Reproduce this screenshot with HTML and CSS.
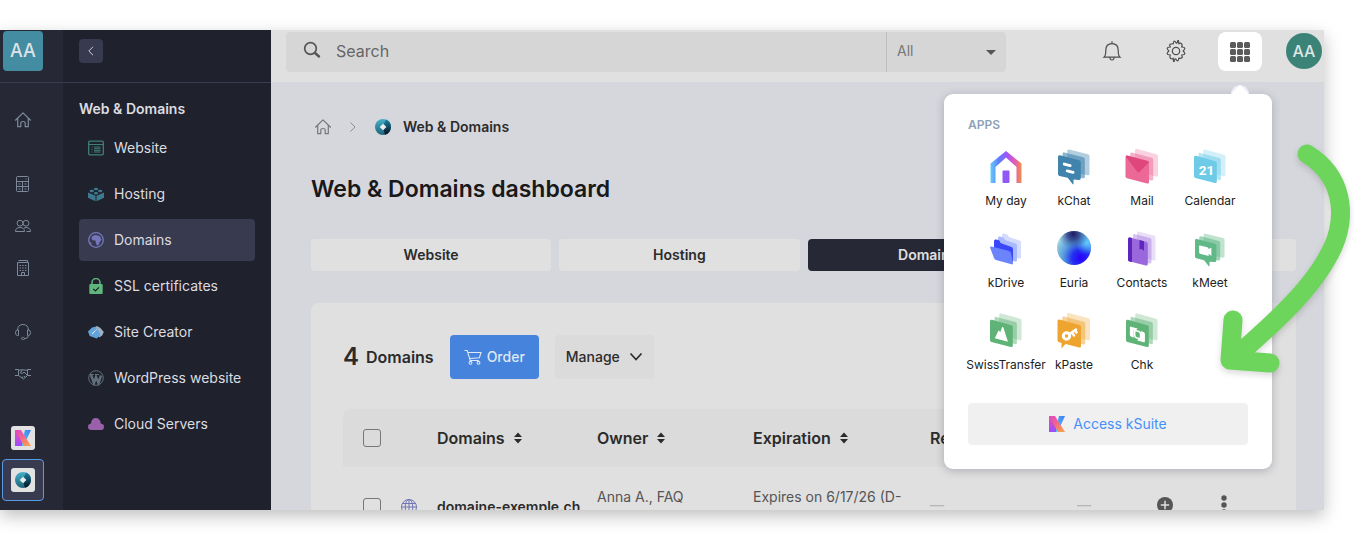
FILE: index.html
```html
<!DOCTYPE html>
<html lang="en">
<head>
  <meta charset="UTF-8">
  <meta name="viewport" content="width=device-width, initial-scale=1.0">
  <title>Web &amp; Domains dashboard</title>
  <link rel="stylesheet" href="styles.css">
</head>
<body>
  <!-- shared shapes -->
  <svg class="defs" aria-hidden="true">
    <defs>
      <linearGradient id="k-left" x1="0" y1="0" x2="0" y2="1"><stop offset="0" stop-color="#f04bb0"/><stop offset="1" stop-color="#9a4dff"/></linearGradient>
      <linearGradient id="k-diag" x1="0" y1="0" x2=".7" y2="1"><stop offset="0" stop-color="#e048c8"/><stop offset=".5" stop-color="#f0648c"/><stop offset="1" stop-color="#fb9a52"/></linearGradient>
      <linearGradient id="k-right" x1="0" y1="1" x2="1" y2="0"><stop offset="0" stop-color="#4fd0f5"/><stop offset="1" stop-color="#3f7cf8"/></linearGradient>
      <linearGradient id="ring" x1="0" y1="0" x2="0" y2="1"><stop offset="0" stop-color="#45b0c8"/><stop offset="1" stop-color="#1e6479"/></linearGradient>
      <linearGradient id="ring-dark" x1="0" y1="0" x2="0" y2="1"><stop offset="0" stop-color="#1d7fa0"/><stop offset="1" stop-color="#05101f"/></linearGradient>
      <linearGradient id="day" x1="0" y1="0" x2="1" y2="0"><stop offset="0" stop-color="#63ccf8"/><stop offset=".28" stop-color="#5f7bff"/><stop offset=".55" stop-color="#a452fb"/><stop offset=".78" stop-color="#e25cb4"/><stop offset="1" stop-color="#f09048"/></linearGradient>
      <radialGradient id="orb-base" cx=".7" cy=".8" r=".85"><stop offset="0" stop-color="#2a00ff"/><stop offset=".3" stop-color="#2330f0"/><stop offset=".6" stop-color="#559bdc"/><stop offset="1" stop-color="#a8dbe4"/></radialGradient>
      <radialGradient id="orb-top" cx=".48" cy=".08" r=".45"><stop offset="0" stop-color="#1d1660"/><stop offset=".4" stop-color="#27347f" stop-opacity=".8"/><stop offset="1" stop-color="#3a60b0" stop-opacity="0"/></radialGradient>
      <radialGradient id="orb-side" cx=".88" cy=".35" r=".35"><stop offset="0" stop-color="#5fcdfa"/><stop offset="1" stop-color="#4aa8f5" stop-opacity="0"/></radialGradient>
      <symbol id="house" viewBox="0 0 16 16"><path d="M.5 8.2 8 .9l7.500 7.300M2.700 6.500v8.200h3.100v-3.700q0-1.500 2.200-1.500t2.200 1.500v3.700h3.100V6.500" fill="none" stroke="currentColor" stroke-width="1.200" stroke-linejoin="round" stroke-linecap="round"/></symbol>
      <symbol id="k-logo" viewBox="0 0 16 16"><path d="M10 0h6L8.500 16H6z" fill="url(#k-right)"/><path d="M0 0h4l3 6v10H0z" fill="url(#k-left)"/><path d="M0 0h6l10 16H9z" fill="url(#k-diag)"/></symbol>
      <symbol id="ring-logo" viewBox="0 0 16 16"><circle cx="8" cy="8" r="8" fill="url(#ring)"/><path d="M9 5 11 .6A8 8 0 0 1 10 15.700L8.500 11l3-3z" fill="url(#ring-dark)"/><path d="m8 4.700 3.300 3.300L8 11.300 4.700 8z" fill="#e6eef0"/></symbol>
      <symbol id="stack" viewBox="0 0 34 36" overflow="visible">
        <path d="M11.500 0 31 5.300q1.500.5 1.500 2V26q0 2-2 1.500L11 22.500q-1.500-.5-1.500-2V1.500q0-2 2-1.500z" fill="currentColor" opacity=".3"/>
        <path d="M6.500 3.500 26.200 8.700q1.500.5 1.500 2V30q0 2-2 1.500L6.200 26q-1.500-.5-1.500-2V5q0-2 1.800-1.500z" fill="currentColor" opacity=".5"/>
        <path d="M2 6.500 22 12q1.500.5 1.500 2v19q0 2-2 1.500l-20-5.200Q0 28.800 0 27.500V8q0-2 2-1.500z" fill="currentColor"/>
      </symbol>
      <symbol id="stack-chat" viewBox="0 0 34 36" overflow="visible">
        <path d="M11.500 0 31 4.800q1.500.5 1.500 2V25q0 2-2 1.500L11 22.500q-1.500-.5-1.500-2V1.500q0-2 2-1.500z" fill="currentColor" opacity=".4"/>
        <path d="M6.500 3 26.200 8q1.500.5 1.500 2v18q0 2-2 1.500L6.200 25q-1.500-.5-1.500-2V4.500q0-2 1.800-1.500z" fill="currentColor" opacity=".6"/>
        <path d="M2 6 22 11q1.500.5 1.500 2v16.500q0 2-2 1.800L16 31v4.200q0 1.300-1 .3L10 29.200l-8.500-2Q0 26.700 0 25.200V7.500Q0 5.500 2 6z" fill="currentColor"/>
      </symbol>
    </defs>
  </svg>

  <div class="window">
    <nav class="rail" aria-label="Main">
      <div class="rail-head"><a href="#" class="org">AA</a></div>
      <div class="rail-body">
        <div class="rail-group">
          <a href="#" aria-label="Home"><svg width="16" height="16"><use href="#house"/></svg></a>
        </div>
        <div class="rail-group">
          <a href="#" aria-label="Accounting"><svg width="16" height="16" viewBox="0 0 16 16"><rect x="1.500" y=".5" width="12" height="15" rx="1"/><path d="M1.500 5.500h12M1.500 10.500h12M7.500 5.500v10M3.500 8h2M9.500 8h2M3.500 13h2M9.500 13h2M11 2.500v1"/></svg></a>
          <a href="#" aria-label="Users"><svg width="16" height="16" viewBox="0 0 16 16"><circle cx="5" cy="5.200" r="2.900"/><circle cx="11" cy="5.200" r="2.900"/><path d="M.5 13.500q0-4 4.500-4t4.500 4zM9 10q1-.6 2-.5 4.500.2 4.500 4h-4"/></svg></a>
          <a href="#" aria-label="Company"><svg width="16" height="16" viewBox="0 0 16 16"><path d="M2.500 2.500h11v13h-11zM3.500.5h9v2M6.500 15.500v-3h3v3"/><path d="M4.500 5.500h7M4.500 8h7M4.500 10.500h7" stroke-dasharray="1.500 1.200"/></svg></a>
        </div>
        <div class="rail-group">
          <a href="#" aria-label="Support"><svg width="16" height="16" viewBox="0 0 16 16"><path d="M2.500 6Q2.800.5 8 .5T13.500 6M3.500 6H2.300Q.5 6.200.5 8.700t1.800 2.800h1.200zM12.500 6h1.200q1.800.2 1.800 2.700t-1.800 2.800h-1.200zM13.500 11.500q-.2 3-4 3.200"/><rect x="6.500" y="13.500" width="3" height="2" rx="1"/></svg></a>
          <a href="#" aria-label="Partners"><svg width="16" height="16" viewBox="0 0 16 16"><path d="M0 3.500h3.500v6H0M16 3.500h-3.500v6H16M3.500 4.500l3-.8L9 4l3.500.3M7 4 5.500 7l2 .5L9 6l3.500 3.500L8.500 13l-5-3.500M7 12l1-1.500M9 11l1-1"/></svg></a>
        </div>
        <div class="rail-group">
          <a href="#" aria-label="kSuite"><span class="tile"><svg width="16" height="16"><use href="#k-logo"/></svg></span></a>
          <a href="#" aria-label="Web and domains" class="current"><span class="tile"><svg width="16" height="16"><use href="#ring-logo"/></svg></span></a>
        </div>
      </div>
    </nav>

    <aside class="sidebar">
      <div class="sidebar-head">
        <button class="collapse" aria-label="Collapse menu"><svg width="10" height="10" viewBox="0 0 10 10"><path d="M7 .8 2.800 5 7 9.200" fill="none" stroke="#cfd0d8"/></svg></button>
      </div>
      <h2>Web &amp; Domains</h2>
      <ul class="menu">
        <li><a href="#"><svg width="16" height="16" viewBox="0 0 16 16" fill="none" stroke="#3f8077"><rect x=".7" y="1.200" width="14.600" height="13.600" rx="1" stroke-width="1.300"/><path d="M1 4.500h14M3.500 7h1M3.500 9.500h1M3.500 12h1M6 7h6.500M6 8.700h6.500M6 10.400h6.500M6 12h6.500"/></svg>Website</a></li>
        <li><a href="#"><svg width="16" height="16" viewBox="0 0 16 16" fill="#3d7a8f"><path d="M0 6.500 7.500 9.800v5.400L0 11.800zM16 6.500 8.500 9.800v5.400l7.500-3.400z"/><ellipse cx="8" cy="3" rx="2.200" ry="1.200"/><ellipse cx="3.800" cy="5" rx="2.200" ry="1.200"/><ellipse cx="12.200" cy="5" rx="2.200" ry="1.200"/><ellipse cx="8" cy="7.200" rx="2.200" ry="1.200"/></svg>Hosting</a></li>
        <li><a href="#" class="current"><svg width="16" height="16" viewBox="0 0 16 16"><circle cx="8" cy="8" r="7.300" fill="none" stroke="#7577bd" stroke-width="1.300"/><path d="M4 4.500 7 3l3 .6 2.500 1.200.2 2.200 1 .6-2 2.400-.7 2.500-2 1.200-1.200-3.200L7.500 8.600 4.600 8.200 3.500 6.500zM1.500 9.500l2 1.500-.3 2.200" fill="#7577bd"/></svg>Domains</a></li>
        <li><a href="#"><svg width="16" height="16" viewBox="0 0 16 16"><path d="M4 7V4.500a4 4 0 0 1 8 0V7" fill="none" stroke="#5fb57c" stroke-width="1.500"/><rect x="1.300" y="6" width="13.400" height="10" rx="1" fill="#5fb57c"/><path d="m5.300 11 2.200 2 3.400-3.600" fill="none" stroke="#1f212c" stroke-width="1.200"/></svg>SSL certificates</a></li>
        <li><a href="#"><svg width="16" height="16" viewBox="0 0 16 16"><path d="M6 3.500 9 2l3.500 2 3.300 4-1.600 3.500-3 2z" fill="#9fb0c2"/><path d="M0 7.500 4 3.600l3.500-.8L11 8l1.500 3-3.800 3.500-7-2.600z" fill="#62a3dc"/><path d="m4 10 3-3M7.500 6.500l1-1" stroke="#eaf2fa"/></svg>Site Creator</a></li>
        <li><a href="#"><svg width="16" height="16" viewBox="0 0 16 16" fill="none" stroke="#5f707c"><circle cx="8" cy="8" r="7.300"/><path d="M3 5 6 13 8 7 10.500 13 13 5.500" stroke-width="2.400"/><path d="M1.800 4.500h4M7 4.500h4" stroke-width="1"/></svg>WordPress website</a></li>
        <li><a href="#"><svg width="16" height="16" viewBox="0 0 16 16" fill="#9a60aa"><path d="M3.500 14Q0 14 0 10.800 0 8 3 7.500 3.500 2 7.800 2T12.800 7.500Q16 8 16 10.900 16 14 12.500 14z"/></svg>Cloud Servers</a></li>
      </ul>
    </aside>

    <div class="main">
      <header class="topbar">
        <form class="search">
          <label for="q" aria-label="Search"><svg width="18" height="18" viewBox="0 0 18 18"><circle cx="7.500" cy="7.500" r="5.800" fill="none" stroke="#555" stroke-width="1.700"/><path d="m12 12 4 3.500" stroke="#555" stroke-width="2.400" stroke-linecap="round"/></svg></label>
          <input id="q" type="search" placeholder="Search">
          <select aria-label="Scope"><option>All</option></select>
        </form>
        <div class="tools">
          <button class="tool" aria-label="Notifications"><svg width="20" height="22" viewBox="0 0 20 22" fill="none" stroke="#4d4d4d" stroke-width="1.200"><path d="M10 3.500V1.200M2 17.200q1.800-1.500 1.800-7 0-6.600 6.200-6.600t6.200 6.600q0 5.500 1.800 7zM7.800 17.500q.3 2.500 2.200 2.500t2.200-2.500"/></svg></button>
          <button class="tool" aria-label="Settings"><svg width="22" height="22" viewBox="0 0 22 22" fill="none" stroke="#4d4d4d" stroke-width="1.200" stroke-linejoin="round"><circle cx="11" cy="11" r="3.700"/><path d="M8.200 3.800Q8.600 1.200 9.300 1.200t1.700 1.500 1.700-1.500 1.100 2.600q2.300-1.400 3 .4t-.2 2.800q3 .3 3.200 1.200t-1.600 2.800q1.800 1.900 1.600 2.800t-3.200 1.200q1.300 2.300.2 2.900t-3 .3q-.4 2.600-1.100 2.600T11 19.300t-1.700 1.500-1.100-2.600q-2.300 1.300-3-.3t.2-2.900q-3-.3-3.200-1.200T3.800 11Q2 9.100 2.200 8.200T5.400 7q-1.300-2.200-.2-2.800t3-.4z"/></svg></button>
          <div class="apps">
            <button class="apps-toggle" aria-label="Apps" aria-expanded="true"><svg width="20" height="20" viewBox="0 0 20 20" fill="#5a5a5a"><rect width="6" height="6" rx="1.500"/><rect x="7" width="6" height="6" rx="1.500"/><rect x="14" width="6" height="6" rx="1.500"/><rect y="7" width="6" height="6" rx="1.500"/><rect x="7" y="7" width="6" height="6" rx="1.500"/><rect x="14" y="7" width="6" height="6" rx="1.500"/><rect y="14" width="6" height="6" rx="1.500"/><rect x="7" y="14" width="6" height="6" rx="1.500"/><rect x="14" y="14" width="6" height="6" rx="1.500"/></svg></button>
            <div class="apps-popup">
              <h3>APPS</h3>
              <div class="apps-grid">
                <a href="#"><svg width="32" height="36" viewBox="0 0 32 36"><path d="M.5 34V14.500L16 2 31.500 14.500V34h-5V18L16 8.500 5.500 18v16z" fill="url(#day)"/><rect x="12.500" y="21.500" width="7" height="12.500" rx="1" fill="#9058f5"/></svg>My day</a>
                <a href="#" class="c-chat"><svg width="32" height="36" viewBox="0 0 33 36"><use href="#stack-chat" width="34" height="36"/><path d="m6.500 15 6 1.500M9.500 22l6 1.500" stroke="#fff" stroke-width="3" stroke-linecap="round"/></svg>kChat</a>
                <a href="#" class="c-mail"><svg width="34" height="36" viewBox="0 0 33 36"><use href="#stack" width="34" height="36"/><path d="M1 6.500 22.500 12q1 .5.6 1.500L13.500 23.500 12 23 .5 8z" fill="#df477c"/></svg>Mail</a>
                <a href="#" class="c-calendar"><svg width="32" height="36" viewBox="0 0 33 36"><use href="#stack" width="34" height="36"/><text x="5" y="26" class="date">21</text></svg>Calendar</a>
                <a href="#" class="c-drive"><svg width="32" height="36" viewBox="0 0 32 36"><path d="M12 4q0-2 2-1.500l3 1q1.500.5 2 2.500l10.500 3.500q1.500.5 1.500 2V26q0 2-2 1.500L12 22z" fill="#d3dcff"/><path d="M8 7q0-2 2-1.500l3 1q1.500.5 2 2.500l10.500 3.500q1.500.5 1.500 2V29q0 2-2 1.500L8 25z" fill="#a9b9ff"/><path d="M4 10q0-2 2-1.500l2.500.6q1.500.5 2 3L21.500 16q1.500.5 1.500 2v13L4 24z" fill="#3a47f8"/><path d="M1.500 15.500 19 20q1.500.5 2 2l2 10q.2 1.800-1.500 1.300L6 29q-1.500-.5-2-2L.2 17q-.5-1.800 1.300-1.500z" fill="#6b84fb"/></svg>kDrive</a>
                <a href="#"><svg width="34" height="36" viewBox="0 0 34 36"><circle cx="17" cy="17" r="17" fill="url(#orb-base)"/><circle cx="17" cy="17" r="17" fill="url(#orb-side)"/><circle cx="17" cy="17" r="17" fill="url(#orb-top)"/></svg>Euria</a>
                <a href="#" class="c-contacts"><svg width="32" height="36" viewBox="0 0 32 36"><path d="M11 2q0-1.800 2-1.300L28 4.500q1.500.5 1.500 2V28q0 2-2 1.500L11 25z" opacity=".22" fill="currentColor"/><path d="M7 4.500q0-1.800 2-1.300L24 7q1.500.5 1.500 2v22q0 2-2 1.500L7 28z" opacity=".4" fill="currentColor"/><path d="M2 8q0-2 2-1.500l16 4.200q1.800.5 1.800 2V33q0 2-2 1.500L2 30z" fill="currentColor"/><path d="M2 8q0-2 2-1.500l2 .5v24l-2.500-.6Q2 30 2 28.500zM13.500 9l4.500 1.200V20l-2.200-2-2.300.5z" fill="#5c26bd"/></svg>Contacts</a>
                <a href="#" class="c-meet"><svg width="30" height="34" viewBox="0 0 33 36"><use href="#stack-chat" width="34" height="36"/><path d="m5.500 13 8 2q1.500.5 1.500 2l3-1.500v9L15 22v2.500L5.500 22q-1-.5-1-1.500v-6.500q0-1.300 1-1z" fill="#fff"/></svg>kMeet</a>
                <a href="#" class="c-swiss"><svg width="32" height="36" viewBox="0 0 33 36"><use href="#stack" width="34" height="36"/><path d="M5 25.500 8.500 18q.5-1 1.200 0l.8 1.200 2-5q.6-1 1.200 0L18.500 29z" fill="#fff"/></svg>SwissTransfer</a>
                <a href="#" class="c-paste"><svg width="34" height="36" viewBox="0 0 33 36"><use href="#stack" width="34" height="36"/><path d="M4 28v7.500l4.500-5z" fill="currentColor"/><circle cx="9" cy="23" r="3.200" fill="none" stroke="#fff" stroke-width="3"/><path d="m12 21 6.500-4.500M14.500 19.500l2 3M17.500 17l1.500 2.500" stroke="#fff" stroke-width="2.500" stroke-linecap="round"/></svg>kPaste</a>
                <a href="#" class="c-swiss"><svg width="32" height="36" viewBox="0 0 33 36"><use href="#stack" width="34" height="36"/><path d="M5 13.500 12 15.300 10.500 17 8 16.600V25L5.500 24q-1.500-.7-1.500-2v-7.500q0-1.200 1-1zM18.500 29.500 11.500 27.700 13 26l2.500.4V18l2.500 1q1.500.7 1.500 2v7.500q0 1.200-1 1z" fill="#fff"/><path d="m9 17.500 3.500.8q2.500.7 2.500 3V26l-3.500-.8Q9 24.500 9 22z" fill="none" stroke="#fff" stroke-width="1.500"/></svg>Chk</a>
              </div>
              <a href="#" class="ksuite"><svg width="16" height="16"><use href="#k-logo"/></svg>Access kSuite</a>
            </div>
          </div>
          <button class="user">AA</button>
        </div>
      </header>

      <main class="content">
        <nav class="breadcrumb" aria-label="Breadcrumb">
          <a href="#" aria-label="Home"><svg width="16" height="16"><use href="#house"/></svg></a>
          <svg width="8" height="10" viewBox="0 0 8 10"><path d="m1.500.5 4.500 4.500-4.500 4.500" fill="none" stroke="#8d8d92"/></svg>
          <a href="#"><svg width="16" height="16"><use href="#ring-logo"/></svg>Web &amp; Domains</a>
        </nav>
        <h1>Web &amp; Domains dashboard</h1>
        <div class="tabs">
          <button>Website</button>
          <button>Hosting</button>
          <button class="current">Domains</button>
          <button></button>
        </div>

        <section class="card">
          <div class="card-head">
            <h2><strong>4</strong> Domains</h2>
            <button class="btn btn-primary"><svg width="18" height="18" viewBox="0 0 18 18" fill="none" stroke="currentColor" stroke-width="1.100"><path d="M.5 2.500h2.700l3 10h8.600M4 4.500h13l-1.600 5.200-9.800.8"/><circle cx="6.500" cy="14.800" r="1.400"/><circle cx="14.500" cy="14.800" r="1.400"/></svg>Order</button>
            <button class="btn">Manage<svg width="14" height="10" viewBox="0 0 14 10"><path d="m1.500 1.500 5.500 6 5.500-6" fill="none" stroke="currentColor" stroke-width="1.700"/></svg></button>
          </div>
          <table>
            <colgroup>
              <col class="col-check"><col class="col-icon"><col class="col-domain"><col class="col-owner"><col class="col-expires"><col class="col-renew"><col class="col-extra"><col class="col-add"><col>
            </colgroup>
            <thead>
              <tr>
                <th><input type="checkbox" aria-label="Select all"></th>
                <th></th>
                <th>Domains <svg class="sort" width="10" height="12" viewBox="0 0 10 12"><path d="M5 .5 9 5H1zM5 11.500 9 7H1z"/></svg></th>
                <th>Owner <svg class="sort" width="10" height="12" viewBox="0 0 10 12"><path d="M5 .5 9 5H1zM5 11.500 9 7H1z"/></svg></th>
                <th>Expiration <svg class="sort" width="10" height="12" viewBox="0 0 10 12"><path d="M5 .5 9 5H1zM5 11.500 9 7H1z"/></svg></th>
                <th>Re</th>
                <th></th>
                <th></th>
                <th></th>
              </tr>
            </thead>
            <tbody>
              <tr>
                <td><input type="checkbox" aria-label="Select domaine-exemple.ch"></td>
                <td><svg width="16" height="16" viewBox="0 0 16 16" fill="none" stroke="#7375b5"><circle cx="8" cy="8" r="7.500"/><ellipse cx="8" cy="8" rx="3.800" ry="7.500"/><path d="M8 .5v15M.5 8h15M1.500 4.500h13M1.500 11.500h13"/></svg></td>
                <td class="domain">domaine-exemple.ch</td>
                <td class="detail">Anna A., FAQ</td>
                <td class="detail">Expires on 6/17/26 (D-</td>
                <td class="none">—</td>
                <td class="none">—</td>
                <td><button class="icon-btn" aria-label="Add"><svg width="16" height="16" viewBox="0 0 16 16"><circle cx="8" cy="8" r="8" fill="#555"/><path d="M8 3.800v8.400M3.800 8h8.400" stroke="#e0e0e0" stroke-width="1.500"/></svg></button></td>
                <td><button class="icon-btn" aria-label="More"><svg width="16" height="20" viewBox="0 0 16 20" fill="#555"><circle cx="8" cy="3" r="2.700"/><circle cx="8" cy="10" r="2.700"/><circle cx="8" cy="17" r="2.700"/></svg></button></td>
              </tr>
            </tbody>
          </table>
        </section>
      </main>
    </div>
  </div>

  <!-- pointer laid over the page -->
  <svg class="pointer" width="150" height="250" viewBox="1204 136 150 250" aria-hidden="true">
    <path d="M1307 154C1343 176 1347 215 1333 247 1314 288 1275 322 1232 360M1233 320l-3 40 40 3" fill="none" stroke="#6dd45c" stroke-width="19" stroke-linecap="round" stroke-linejoin="round"/>
  </svg>
</body>
</html>
```
FILE: styles.css
```css
* {
  box-sizing: border-box;
}

body {
  margin: 0;
  padding: 30px 30px 30px 0;
  height: 100vh;
  position: relative;
  overflow: hidden;
  background: #fff;
  color: #2b2b2b;
  font-family: Inter, "Liberation Sans", sans-serif;
  font-size: 14px;
  line-height: 20px;
}

a {
  color: inherit;
  text-decoration: none;
}

button,
input,
select {
  font: inherit;
  color: inherit;
}

button {
  border: none;
  padding: 0;
  background: none;
  cursor: pointer;
}

h1,
h2,
h3,
ul {
  margin: 0;
  padding: 0;
}

svg {
  display: block;
  flex: none;
}

.defs {
  position: absolute;
  width: 0;
  height: 0;
}

.window {
  display: flex;
  height: 100%;
  overflow: hidden;
  background: #d6d7dd;
  box-shadow: 0 6px 16px rgba(0, 0, 0, 0.25);
}

/* icon rail */
.rail {
  width: 63px;
  flex: none;
  background: #262935;
  color: #7c8a99;
}

.rail-head,
.sidebar-head {
  height: 53px;
  border-bottom: 1px solid #3a3c52;
}

.rail-head {
  padding: 1px 3px;
}

.org {
  display: flex;
  align-items: center;
  justify-content: center;
  width: 40px;
  height: 40px;
  border-radius: 4px;
  background: #438ca2;
  color: #dde3e6;
  font-size: 18px;
  font-weight: 500;
}

.rail-body {
  display: flex;
  flex-direction: column;
  gap: 22px;
  padding: 16px 2px;
}

.rail-group a {
  display: flex;
  align-items: center;
  justify-content: center;
  width: 42px;
  height: 42px;
  border-radius: 4px;
}

.rail-group a > svg {
  fill: none;
  stroke: currentColor;
}

.rail-group a.current {
  border: 1px solid #5b9be6;
  background: #383a50;
}

.tile {
  padding: 4px;
  border-radius: 3px;
  background: #e2e2e2;
}

/* section menu */
.sidebar {
  width: 208px;
  flex: none;
  background: #1f212c;
  color: #dcdce0;
}

.sidebar-head {
  padding: 9px 16px;
}

.collapse {
  display: flex;
  align-items: center;
  justify-content: center;
  width: 24px;
  height: 24px;
  border-radius: 4px;
  background: #383a50;
}

.sidebar h2 {
  padding: 16px 16px 8px;
  font-size: 14px;
  font-weight: 600;
}

.menu {
  display: flex;
  flex-direction: column;
  gap: 4px;
  padding: 0 16px;
  list-style: none;
}

.menu a {
  display: flex;
  align-items: center;
  gap: 10px;
  height: 42px;
  padding: 0 9px;
  border-radius: 4px;
  white-space: nowrap;
}

.menu a.current {
  background: #383a50;
}

/* top bar */
.main {
  flex: 1;
  min-width: 0;
}

.topbar {
  display: flex;
  justify-content: space-between;
  height: 52px;
  padding: 2px 2px 0 15px;
  background: #e0e0e0;
}

.search {
  display: flex;
  align-items: center;
  width: 720px;
  height: 40px;
  border-radius: 4px;
  background: #d6d6d6;
}

.search label {
  padding: 0 15px 4px 17px;
}

.search input {
  flex: 1;
  min-width: 0;
  height: 100%;
  padding: 0 0 2px;
  border: none;
  outline: none;
  background: none;
  font-size: 16px;
}

.search input::placeholder {
  color: #666;
  opacity: 1;
}

.search select {
  appearance: none;
  width: 120px;
  height: 100%;
  padding: 0 10px 2px;
  border: none;
  border-left: 1px solid #bdbdbd;
  border-radius: 0 4px 4px 0;
  background: url("data:image/svg+xml,%3Csvg xmlns='http://www.w3.org/2000/svg' width='10' height='5'%3E%3Cpath d='M0 0h10L5 5z' fill='%23555'/%3E%3C/svg%3E") no-repeat right 10px center;
  color: #777;
}

.tools {
  display: flex;
  align-items: flex-start;
}

.tool {
  display: flex;
  align-items: center;
  justify-content: center;
  width: 64px;
  height: 38px;
}

.apps {
  position: relative;
  margin-left: 10px;
}

.apps-toggle {
  display: flex;
  align-items: center;
  justify-content: center;
  width: 44px;
  height: 39px;
  border-radius: 8px;
  background: #fff;
}

.user {
  width: 36px;
  height: 36px;
  margin: 1px 0 0 24px;
  border-radius: 50%;
  background: #3b8277;
  color: #dfe6e5;
  font-size: 16px;
  font-weight: 500;
}

.apps-popup {
  position: absolute;
  z-index: 2;
  top: 62px;
  right: -10px;
  width: 328px;
  padding: 21px 24px 24px;
  border-radius: 9px;
  background: #fff;
  box-shadow: 0 2px 10px rgba(0, 0, 40, 0.22);
}

/* rounded tab with a white notch pointing at the toggle */
.apps-popup::before,
.apps-popup::after {
  content: "";
  position: absolute;
  top: -9px;
  right: 23px;
  width: 18px;
  height: 9px;
}

.apps-popup::before {
  border-radius: 9px 9px 0 0;
  background: #eeeef8;
}

.apps-popup::after {
  background: #fff;
  clip-path: polygon(50% 0, 100% 100%, 0 100%);
}

.apps-popup h3 {
  color: #8ea1b9;
  font-size: 12px;
  font-weight: 600;
}

.apps-grid {
  display: grid;
  grid-template-columns: repeat(4, 68px);
  grid-auto-rows: 82px;
  justify-content: center;
  margin: 14px 0 8px;
  font-size: 12px;
}

.apps-grid a {
  display: flex;
  flex-direction: column;
  align-items: center;
  justify-content: flex-end;
  gap: 6px;
  height: 62px;
  white-space: nowrap;
  color: #222;
}

.date {
  fill: #fff;
  font-family: Roboto, sans-serif;
  font-size: 14px;
  font-weight: 700;
}

.c-chat svg { color: #4084ad; }
.c-mail svg { color: #ec6897; }
.c-calendar svg { color: #6dcbe8; }
.c-contacts svg { color: #9a68dc; }
.c-meet svg { color: #62b988; }
.c-swiss svg { color: #5fb377; }
.c-paste svg { color: #eea52f; }

.ksuite {
  display: flex;
  align-items: center;
  justify-content: center;
  gap: 8px;
  height: 42px;
  border-radius: 4px;
  background: #f0f0f0;
  color: #4490f8;
}

/* page */
.content {
  padding: 35px 28px 0 40px;
}

.breadcrumb {
  display: flex;
  align-items: center;
  gap: 18px;
  padding-left: 4px;
  color: #77777b;
}

.breadcrumb a {
  display: flex;
  align-items: center;
  gap: 12px;
}

.breadcrumb a:last-child {
  color: #2b2b2b;
  font-weight: 600;
}

h1 {
  margin: 36px 0 34px;
  color: #191919;
  font-size: 23px;
  font-weight: 600;
  line-height: 32px;
}

.tabs {
  display: flex;
  gap: 8px;
}

.tabs button {
  flex: 1;
  height: 32px;
  border-radius: 4px;
  background: #e0e0e0;
  font-weight: 600;
}

.tabs button.current {
  background: #262935;
  color: #e0e0e0;
}

.card {
  margin-top: 32px;
  padding: 32px;
  border-radius: 8px;
  background: #e0e0e0;
}

.card-head {
  display: flex;
  align-items: center;
  gap: 16px;
  margin-bottom: 30px;
}

.card-head h2 {
  display: flex;
  align-items: center;
  gap: 7px;
  font-size: 16px;
  font-weight: 600;
}

.card-head strong {
  font-size: 24px;
  font-weight: 600;
}

.btn {
  display: flex;
  align-items: center;
  gap: 9px;
  height: 44px;
  padding: 0 11px;
  border-radius: 4px;
  background: #dbdbdb;
  font-weight: 500;
}

.btn-primary {
  gap: 5px;
  padding: 0 14px;
  background: #4583dd;
  color: #dfe8f5;
}

table {
  width: 100%;
  table-layout: fixed;
  border-collapse: collapse;
}

.col-check { width: 58px; }
.col-icon { width: 36px; }
.col-domain { width: 160px; }
.col-owner { width: 156px; }
.col-expires { width: 177px; }
.col-renew { width: 147px; }
.col-extra { width: 80px; }
.col-add { width: 59px; }

th,
td {
  padding: 0;
  text-align: left;
  white-space: nowrap;
}

th {
  height: 58px;
  background: #dbdbdb;
  font-size: 16px;
  font-weight: 600;
}

th:first-child {
  border-radius: 8px 0 0 0;
}

th:last-child {
  border-radius: 0 8px 0 0;
}

th:first-child,
td:first-child {
  padding-left: 20px;
}

td {
  height: 80px;
}

input[type="checkbox"] {
  display: block;
  appearance: none;
  width: 18px;
  height: 18px;
  margin: 0;
  border: 1px solid #777;
  border-radius: 3px;
}

.sort {
  display: inline-block;
  margin-left: 4px;
  fill: #2b2b2b;
}

.domain {
  font-weight: 600;
}

.detail {
  padding-top: 20px;
  vertical-align: top;
  color: #555;
}

.none {
  padding-bottom: 4px;
  color: #b5b5b5;
}

.icon-btn {
  display: block;
}

td .icon-btn {
  margin-bottom: 4px;
}

.pointer {
  position: absolute;
  z-index: 3;
  top: 136px;
  right: 0;
  filter: drop-shadow(0 3px 3px rgba(0, 0, 0, 0.15));
}
```
